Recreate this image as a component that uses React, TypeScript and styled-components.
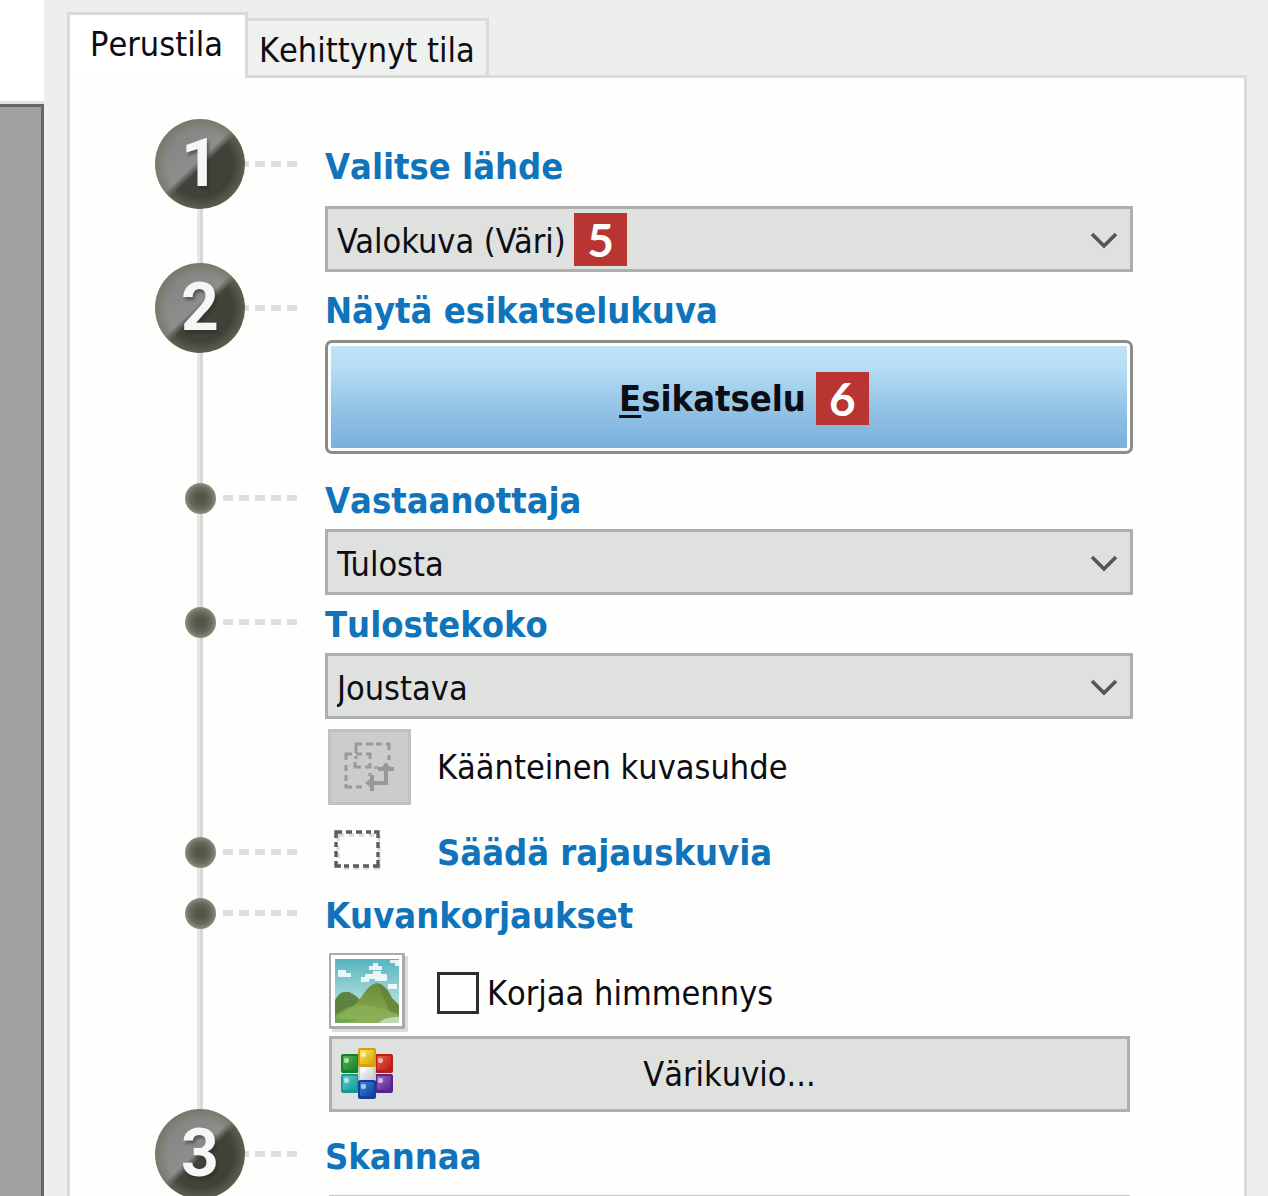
import React, { useState } from "react";
import styled, { createGlobalStyle, css } from "styled-components";

const uiFont = '"DejaVu Sans Condensed", "Noto Sans", sans-serif';

const GlobalStyle = createGlobalStyle`
  *, *::before, *::after { box-sizing: border-box; }
  body {
    margin: 0;
    background: #edefec;
    color: #0c0c14;
    font-family: ${uiFont};
    font-size: 34px;
    line-height: 46px;
    font-kerning: none;
  }
  button, select, input { font: inherit; color: inherit; margin: 0; }
`;

const Window = styled.div`
  display: flex;
  height: 100vh;
  overflow: hidden;
`;

const PreviewEdge = styled.aside`
  flex: none;
  width: 44px;
  display: flex;
  flex-direction: column;
  background: #fff;
  padding-top: 104px;
`;

const PreviewArea = styled.div`
  flex: 1;
  background: #a0a19e;
  border-top: 3px solid #666864;
  border-right: 3px solid #666864;
  box-shadow: 0 -3px 0 #e0e2df;
`;

const Dialog = styled.main`
  flex: 1;
  min-width: 0;
  display: flex;
  flex-direction: column;
  padding: 12px 21px 0 23px;
`;

const TabList = styled.div`
  display: flex;
  align-items: flex-end;
  height: 63px;
`;

const Tab = styled.button<{ $active: boolean }>`
  border: 3px solid #d9dbd8;
  border-bottom: 0;
  white-space: nowrap;
  ${(p) =>
    p.$active
      ? css`
          height: 66px;
          align-self: flex-start;
          padding: 6px 22px 14px 20px;
          background: #fff;
          position: relative;
          z-index: 1;
        `
      : css`
          height: 57px;
          padding: 6px 11px;
          border-left: 0;
          background: #eff1ee;
        `}
`;

const Panel = styled.section`
  flex: 1;
  background: #fefefd;
  border: 3px solid #d9dbd8;
  border-bottom: 0;
  padding: 63px 111px 0 85px;
`;

const Steps = styled.ol`
  list-style: none;
  margin: 0;
  padding: 0;
  background: linear-gradient(90deg, #e6e6e6 0 3px, #d6d7d6 3px 6px) 42px 20px / 6px 100% no-repeat;
`;

const StepItem = styled.li<{ $before?: number }>`
  display: flex;
  align-items: flex-start;
  gap: 28px;
  margin-top: ${(p) => p.$before ?? 0}px;
`;

const Marker = styled.div`
  flex: none;
  width: 142px;
  height: 46px;
  display: flex;
  align-items: center;
  background: repeating-linear-gradient(90deg, #dedede 0 10px, transparent 10px 16px) 68px 20px / 74px 6px no-repeat;
`;

const MarkerSlot = styled.div`
  width: 90px;
  display: flex;
  justify-content: center;
`;

const Ball = styled.span`
  flex: none;
  width: 90px;
  height: 90px;
  border-radius: 50%;
  display: flex;
  align-items: center;
  justify-content: center;
  background:
    radial-gradient(circle, transparent 52%, rgba(112, 112, 92, 0.7) 72%),
    linear-gradient(137deg, #7f807d 0%, #8d8e8c 47%, #42423a 53%, #3e3e34 100%);
  color: #f6f6f6;
  font: bold 66px/90px Roboto, sans-serif;
  text-shadow: 2px 3px 3px rgba(40, 40, 36, 0.5);
`;

const Dot = styled.span`
  width: 31px;
  height: 31px;
  border-radius: 50%;
  background: radial-gradient(circle, #55554a 0 20%, #6c6c5e 50%, #8f8f83 72%);
`;

const Content = styled.div<{ $level?: boolean }>`
  flex: 1;
  min-width: 0;
  padding-top: ${(p) => (p.$level ? 0 : 3)}px;
`;

const Heading = styled.h2<{ $gap?: number }>`
  margin: 0 0 ${(p) => p.$gap ?? 0}px;
  font-size: 36px;
  line-height: 46px;
  font-weight: bold;
  color: #0f74bb;
  white-space: nowrap;
`;

const SelectBox = styled.div`
  position: relative;
`;

const Select = styled.select`
  display: block;
  width: 100%;
  height: 66px;
  padding: 3px 60px 0 9px;
  appearance: none;
  border: 3px solid #adafac;
  border-radius: 0;
  background: #dfe1de;
  font-kerning: normal;
`;

const ChevronIcon = styled.svg`
  position: absolute;
  right: 15px;
  top: 25px;
  width: 28px;
  height: 18px;
  pointer-events: none;
`;

const Badge = styled.span`
  display: flex;
  align-items: center;
  justify-content: center;
  width: 53px;
  height: 53px;
  background: #b93532;
  color: #fff;
  font: bold 46px/53px Lato, sans-serif;
`;

const SelectBadge = styled(Badge)`
  position: absolute;
  left: 249px;
  top: 7px;
`;

const PreviewButton = styled.button`
  display: flex;
  align-items: center;
  justify-content: center;
  gap: 10px;
  width: 100%;
  height: 114px;
  padding: 3px 0 0 30px;
  border: 3px solid #8b8b88;
  border-radius: 7px;
  box-shadow: inset 0 0 0 3px #fbfdff;
  background: linear-gradient(#c3e4f5 0%, #b4dcf2 25%, #92c2e5 62%, #79aeda 100%);
  font-weight: bold;
  font-size: 36px;
  font-kerning: normal;
`;

const Underlined = styled.span`
  text-decoration: underline;
  text-decoration-thickness: 3px;
  text-underline-offset: 4px;
`;

const OptionRow = styled.div<{ $before?: number }>`
  display: grid;
  grid-template-columns: 112px 1fr;
  align-items: center;
  margin-top: ${(p) => p.$before ?? 0}px;
`;

const RatioButton = styled.button`
  display: block;
  width: 83px;
  height: 76px;
  margin-left: 3px;
  padding: 0;
  border: 3px solid #c0c2bf;
  background: #cbcdca;
  svg { display: block; }
`;

const CropIcon = styled.svg`
  display: block;
  margin-left: 8px;
`;

const PhotoIcon = styled.svg`
  display: block;
  margin-left: 3px;
`;

const CheckLabel = styled.label`
  display: flex;
  align-items: center;
  gap: 8px;
`;

const Checkbox = styled.input`
  appearance: none;
  width: 42px;
  height: 42px;
  border: 3px solid #2f2f2f;
  background: #fff;
`;

const PatternButton = styled.button`
  display: grid;
  grid-template-columns: 52px 1fr 52px;
  align-items: center;
  width: calc(100% - 7px);
  height: 76px;
  margin: 3px 3px 0 4px;
  padding: 0 9px;
  border: 3px solid #adafac;
  background: #dfe1de;
  svg { display: block; }
`;

const ScanButton = styled.button`
  display: block;
  width: calc(100% - 7px);
  height: 76px;
  margin: 0 4px;
  border: 3px solid #c9cbc8;
  background: #dfe1de;
`;

function Combo({ id, value, badge }: { id: string; value: string; badge?: string }) {
  return (
    <SelectBox>
      <Select aria-labelledby={id} defaultValue={value}>
        <option value={value}>{value}</option>
      </Select>
      {badge && <SelectBadge>{badge}</SelectBadge>}
      <ChevronIcon viewBox="0 0 28 18" aria-hidden="true">
        <path d="M2 3 L14 15 L26 3" fill="none" stroke="#555653" strokeWidth="3.6" />
      </ChevronIcon>
    </SelectBox>
  );
}

function RatioGlyph() {
  return (
    <svg width="77" height="70" viewBox="0 0 77 70" aria-hidden="true">
      <g fill="none" stroke="#989a97" strokeWidth="3">
        <path d="M25 21V12H31M35 12H42M45 12H51M55 12H58V18M58 23V28M25 24V27" />
        <path d="M15 28V22H21M25 22H31M35 22H39V27M39 31V35H34M30 35H24V30M15 33V39M15 43V49M15 52V55H21M25 55H31" />
      </g>
      <path d="M55 36V51H40" fill="none" stroke="#989a97" strokeWidth="4" />
      <path d="M55 30L59 35H63V39H47V35H51ZM34 51L39 47V43H43V59H39V55Z" fill="#989a97" />
      <path d="M37 41h4v3h-4zM43 34h4v3h-4z" fill="#a4a6a3" />
    </svg>
  );
}

function CropGlyph() {
  return (
    <CropIcon width="50" height="48" viewBox="0 0 50 48" aria-hidden="true">
      <g fill="none" strokeWidth="3.4">
        <path transform="translate(2 3)" stroke="#d9dad8" d="M3 9V3H9M14 3H19M24 3H29M34 3H39M44 3V9M44 14V19M44 24V29M44 32V36H39M34 36H29M24 36H19M14 36H9M3 36V31M3 26V21M3 18V14" />
        <path stroke="#5c5e5b" d="M3 9V3H9M13 3H19M23 3H29M33 3H38M41 3H45V9M45 13V19M45 23V28M45 31V37H40M36 37H30M26 37H20M16 37H11M8 37H3V32M3 28V22M3 18V13" />
      </g>
    </CropIcon>
  );
}

function PhotoGlyph() {
  return (
    <PhotoIcon width="82" height="80" viewBox="0 0 82 80" aria-hidden="true">
      <defs>
        <linearGradient id="sky" x1="0" y1="0" x2="0" y2="1">
          <stop offset="0" stopColor="#58b4bd" />
          <stop offset="1" stopColor="#d9f1ec" />
        </linearGradient>
        <linearGradient id="hill" x1="0" y1="0" x2="0" y2="1">
          <stop offset="0" stopColor="#6b8a3c" />
          <stop offset="0.55" stopColor="#7e9f45" />
          <stop offset="1" stopColor="#83ae57" />
        </linearGradient>
        <clipPath id="frame"><rect x="7" y="6" width="64" height="64" /></clipPath>
      </defs>
      <rect x="4" y="3" width="76" height="76" fill="#dcdddb" />
      <rect x="1" y="0" width="76" height="76" rx="1" fill="#a9aba8" />
      <rect x="3" y="2" width="71" height="71" fill="#fff" />
      <g clipPath="url(#frame)">
        <rect x="7" y="6" width="64" height="64" fill="url(#sky)" />
        <path d="M10 17h8v3h5v4h-13zM41 13h4v-3h5v3h4v4h-13zM33 24h4v-3h8v-3h8v3h6v7h-12v-2h-6v3h-8zM62 7h9v6h-4v-3h-5zM60 31h9v5h-9z" fill="#fff" opacity=".85" />
        <path d="M7 47 Q12 37 21 39 Q28 42 33 48 L22 60 L7 66Z" fill="#5d8340" />
        <path d="M7 64 Q24 58 34 43 Q42 30 50 30 Q59 34 64 45 L71 52 V70 H7Z" fill="url(#hill)" />
        <path d="M50 31 Q56 46 62 60 L71 62 V52 L64 45 Q59 34 53 31Z" fill="#5d7a38" opacity=".6" />
        <path d="M7 62 Q26 48 43 53 Q60 56 71 62 V70 H7Z" fill="#91b45a" opacity=".6" />
        <path d="M7 63 Q15 68 31 66 Q22 70 7 70Z" fill="#5c9c54" opacity=".6" />
        <path d="M50 70 Q58 63 71 64V70H50Z" fill="#c8e5cf" opacity=".8" />
      </g>
    </PhotoIcon>
  );
}

const cubes = [
  { x: 0, y: 7, light: "#52b552", dark: "#13812a" },
  { x: 34, y: 7, light: "#ef5a44", dark: "#b81a17" },
  { x: 0, y: 27, light: "#62cfca", dark: "#119a96" },
  { x: 34, y: 27, light: "#a069c4", dark: "#56208e" },
  { x: 17, y: 17, light: "#ffffff", dark: "#c6c9cc" },
  { x: 17, y: 1, light: "#ffe557", dark: "#d3a10e" },
  { x: 17, y: 33, light: "#3d83d6", dark: "#103f9c" },
];

function CubesGlyph() {
  return (
    <svg width="52" height="54" viewBox="0 0 52 54" aria-hidden="true">
      {cubes.map((c, i) => (
        <g key={i}>
          <defs>
            <linearGradient id={`cube${i}`} x1="0" y1="0" x2="1" y2="1">
              <stop offset="0" stopColor={c.light} />
              <stop offset="1" stopColor={c.dark} />
            </linearGradient>
          </defs>
          <rect x={c.x} y={c.y} width="18" height="19" rx="2" fill={c.dark} />
          <rect x={c.x + 2} y={c.y + 2} width="14" height="14" rx="1" fill={`url(#cube${i})`} />
          <rect x={c.x + 3} y={c.y + 4} width="5" height="5" rx="2" fill="#fff" opacity=".6" />
        </g>
      ))}
    </svg>
  );
}

function Step({
  number,
  before,
  level,
  children,
}: {
  number?: string;
  before?: number;
  level?: boolean;
  children: React.ReactNode;
}) {
  return (
    <StepItem $before={before}>
      <Marker>
        <MarkerSlot>{number ? <Ball>{number}</Ball> : <Dot />}</MarkerSlot>
      </Marker>
      <Content $level={level}>{children}</Content>
    </StepItem>
  );
}

export default function App() {
  const [vignette, setVignette] = useState(false);
  return (
    <>
      <GlobalStyle />
      <Window>
        <PreviewEdge>
          <PreviewArea />
        </PreviewEdge>
        <Dialog>
          <TabList role="tablist">
            <Tab role="tab" aria-selected="true" $active>Perustila</Tab>
            <Tab role="tab" aria-selected="false" $active={false}>Kehittynyt tila</Tab>
          </TabList>
          <Panel role="tabpanel">
            <Steps>
              <Step number="1">
                <Heading id="source" $gap={16}>Valitse lähde</Heading>
                <Combo id="source" value="Valokuva (Väri)" badge="5" />
              </Step>
              <Step number="2" before={13}>
                <Heading $gap={6}>Näytä esikatselukuva</Heading>
                <PreviewButton>
                  <span><Underlined>E</Underlined>sikatselu</span>
                  <Badge>6</Badge>
                </PreviewButton>
              </Step>
              <Step before={21}>
                <Heading id="destination" $gap={5}>Vastaanottaja</Heading>
                <Combo id="destination" value="Tulosta" />
              </Step>
              <Step before={4}>
                <Heading id="size" $gap={5}>Tulostekoko</Heading>
                <Combo id="size" value="Joustava" />
                <OptionRow $before={10}>
                  <RatioButton id="ratio" aria-labelledby="ratio-label"><RatioGlyph /></RatioButton>
                  <label id="ratio-label" htmlFor="ratio">Käänteinen kuvasuhde</label>
                </OptionRow>
              </Step>
              <Step before={24} level>
                <OptionRow>
                  <CropGlyph />
                  <Heading>Säädä rajauskuvia</Heading>
                </OptionRow>
              </Step>
              <Step before={13}>
                <Heading $gap={14}>Kuvankorjaukset</Heading>
                <OptionRow>
                  <PhotoGlyph />
                  <CheckLabel>
                    <Checkbox
                      type="checkbox"
                      checked={vignette}
                      onChange={(e) => setVignette(e.target.checked)}
                    />
                    Korjaa himmennys
                  </CheckLabel>
                </OptionRow>
                <PatternButton>
                  <CubesGlyph />
                  <span>Värikuvio...</span>
                </PatternButton>
              </Step>
              <Step number="3" before={19}>
                <Heading $gap={15}>Skannaa</Heading>
                <ScanButton aria-label="Skannaa" />
              </Step>
            </Steps>
          </Panel>
        </Dialog>
      </Window>
    </>
  );
}
